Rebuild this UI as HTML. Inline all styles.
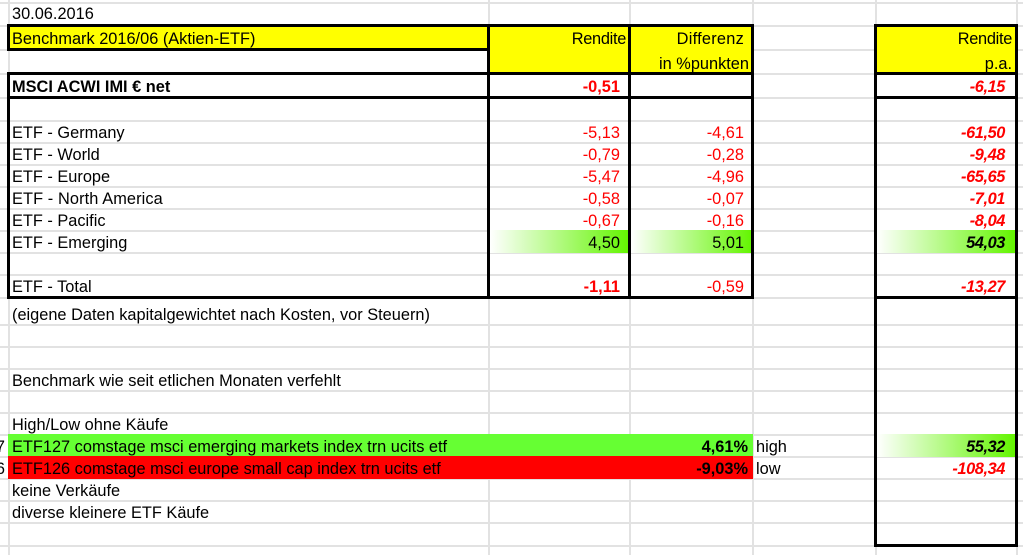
<!DOCTYPE html>
<html><head><meta charset="utf-8"><style>
html,body{margin:0;padding:0;background:#fff}
#p{position:relative;width:1023px;height:555px;overflow:hidden;background:#fff;font:16.35px/30px "Liberation Sans",sans-serif;color:#000}
#p div{position:absolute}
.h{left:0;width:1023px;height:2px;background:#e2e2e2}
.v{top:0;height:555px;width:2px;background:#e2e2e2}
.k{background:#000}
.t{white-space:nowrap}
.r{white-space:nowrap;text-align:right}
.n{color:#f00}
.b{font-weight:bold}
.i{font-style:italic;font-weight:bold;letter-spacing:-.4px}
</style></head><body><div id="p">
<div class="h" style="top:2px"></div><div class="h" style="top:25px"></div><div class="h" style="top:49px"></div><div class="h" style="top:73px"></div><div class="h" style="top:97px"></div><div class="h" style="top:120px"></div><div class="h" style="top:142px"></div><div class="h" style="top:164px"></div><div class="h" style="top:186px"></div><div class="h" style="top:208px"></div><div class="h" style="top:230px"></div><div class="h" style="top:252px"></div><div class="h" style="top:274px"></div><div class="h" style="top:297px"></div><div class="h" style="top:324px"></div><div class="h" style="top:346px"></div><div class="h" style="top:368px"></div><div class="h" style="top:390px"></div><div class="h" style="top:412px"></div><div class="h" style="top:434px"></div><div class="h" style="top:456px"></div><div class="h" style="top:478px"></div><div class="h" style="top:500px"></div><div class="h" style="top:522px"></div><div class="h" style="top:545px"></div>
<div class="v" style="left:8px"></div><div class="v" style="left:488px"></div><div class="v" style="left:629px"></div><div class="v" style="left:752px"></div><div class="v" style="left:875px"></div><div class="v" style="left:1016px"></div>

<div style="left:10px;top:27px;width:478px;height:22px;background:#ff0"></div>
<div style="left:490px;top:27px;width:139px;height:46px;background:#ff0"></div>
<div style="left:631px;top:27px;width:121px;height:46px;background:#ff0"></div>
<div style="left:877px;top:27px;width:138px;height:46px;background:#ff0"></div>
<div style="left:490px;top:230px;width:139px;height:23px;background:linear-gradient(90deg,#fff,#63f500)"></div>
<div style="left:631px;top:230px;width:121px;height:23px;background:linear-gradient(90deg,#fff,#63f500)"></div>
<div style="left:877px;top:230px;width:138px;height:23px;background:linear-gradient(90deg,#fff,#63f500)"></div>
<div style="left:877px;top:434px;width:138px;height:23px;background:linear-gradient(90deg,#fff,#63f500)"></div>
<div style="left:8px;top:434px;width:745px;height:22px;background:#66ff33"></div>
<div style="left:8px;top:456px;width:745px;height:23px;background:#f00"></div>

<div class="k" style="left:7px;top:24px;width:747px;height:3px"></div>
<div class="k" style="left:7px;top:48px;width:482px;height:3px"></div>
<div class="k" style="left:7px;top:72px;width:747px;height:3px"></div>
<div class="k" style="left:7px;top:96px;width:747px;height:3px"></div>
<div class="k" style="left:7px;top:296px;width:747px;height:3px"></div>
<div class="k" style="left:7px;top:24px;width:3px;height:27px"></div>
<div class="k" style="left:7px;top:72px;width:3px;height:227px"></div>
<div class="k" style="left:487px;top:24px;width:3px;height:275px"></div>
<div class="k" style="left:628px;top:24px;width:3px;height:275px"></div>
<div class="k" style="left:751px;top:24px;width:3px;height:275px"></div>
<div class="k" style="left:874px;top:24px;width:144px;height:3px"></div>
<div class="k" style="left:874px;top:72px;width:144px;height:3px"></div>
<div class="k" style="left:874px;top:96px;width:144px;height:3px"></div>
<div class="k" style="left:874px;top:296px;width:144px;height:3px"></div>
<div class="k" style="left:874px;top:544px;width:144px;height:3px"></div>
<div class="k" style="left:874px;top:24px;width:3px;height:523px"></div>
<div class="k" style="left:1015px;top:24px;width:3px;height:523px"></div>

<div class="t" style="left:12px;top:-1px">30.06.2016</div>
<div class="t" style="left:12px;top:24px">Benchmark 2016/06 (Aktien-ETF)</div>
<div class="t b" style="left:12px;top:72px">MSCI ACWI IMI € net</div>
<div class="t" style="left:12px;top:118px">ETF - Germany</div>
<div class="t" style="left:12px;top:140px">ETF - World</div>
<div class="t" style="left:12px;top:162px">ETF - Europe</div>
<div class="t" style="left:12px;top:184px;letter-spacing:.1px">ETF - North America</div>
<div class="t" style="left:12px;top:206px">ETF - Pacific</div>
<div class="t" style="left:12px;top:228px">ETF - Emerging</div>
<div class="t" style="left:12px;top:272px">ETF - Total</div>
<div class="t" style="left:12px;top:300px">(eigene Daten kapitalgewichtet nach Kosten, vor Steuern)</div>
<div class="t" style="left:12px;top:366px">Benchmark wie seit etlichen Monaten verfehlt</div>
<div class="t" style="left:12px;top:410px">High/Low ohne Käufe</div>
<div class="t" style="left:12px;top:432px">ETF127 comstage msci emerging markets index trn ucits etf</div>
<div class="t" style="left:12px;top:454px">ETF126 comstage msci europe small cap index trn ucits etf</div>
<div class="t" style="left:12px;top:476px">keine Verkäufe</div>
<div class="t" style="left:12px;top:498px">diverse kleinere ETF Käufe</div>
<div class="r" style="right:1018px;top:432px">7</div>
<div class="r" style="right:1018px;top:454px">6</div>
<div class="t" style="left:756px;top:432px">high</div>
<div class="t" style="left:756px;top:454px">low</div>

<div class="r" style="right:397px;top:24px;letter-spacing:-.3px">Rendite</div>
<div class="r" style="right:279px;top:24px;letter-spacing:.25px">Differenz</div>
<div class="r" style="right:274px;top:49px">in %punkten</div>
<div class="r" style="right:11px;top:24px;letter-spacing:-.3px">Rendite</div>
<div class="r" style="right:11px;top:49px">p.a.</div>

<div class="r n b" style="right:403px;top:72px">-0,51</div>
<div class="r n" style="right:403px;top:118px">-5,13</div>
<div class="r n" style="right:403px;top:140px">-0,79</div>
<div class="r n" style="right:403px;top:162px">-5,47</div>
<div class="r n" style="right:403px;top:184px">-0,58</div>
<div class="r n" style="right:403px;top:206px">-0,67</div>
<div class="r" style="right:403px;top:228px">4,50</div>
<div class="r n b" style="right:403px;top:272px">-1,11</div>

<div class="r n" style="right:279px;top:118px">-4,61</div>
<div class="r n" style="right:279px;top:140px">-0,28</div>
<div class="r n" style="right:279px;top:162px">-4,96</div>
<div class="r n" style="right:279px;top:184px">-0,07</div>
<div class="r n" style="right:279px;top:206px">-0,16</div>
<div class="r" style="right:279px;top:228px">5,01</div>
<div class="r n" style="right:279px;top:272px">-0,59</div>

<div class="r n i" style="right:18px;top:72px">-6,15</div>
<div class="r n i" style="right:18px;top:118px">-61,50</div>
<div class="r n i" style="right:18px;top:140px">-9,48</div>
<div class="r n i" style="right:18px;top:162px">-65,65</div>
<div class="r n i" style="right:18px;top:184px">-7,01</div>
<div class="r n i" style="right:18px;top:206px">-8,04</div>
<div class="r i" style="right:18px;top:228px">54,03</div>
<div class="r n i" style="right:18px;top:272px">-13,27</div>
<div class="r i" style="right:18px;top:432px">55,32</div>
<div class="r n i" style="right:18px;top:454px">-108,34</div>

<div class="r b" style="right:275px;top:432px">4,61%</div>
<div class="r b" style="right:275px;top:454px">-9,03%</div>
</div></body></html>
